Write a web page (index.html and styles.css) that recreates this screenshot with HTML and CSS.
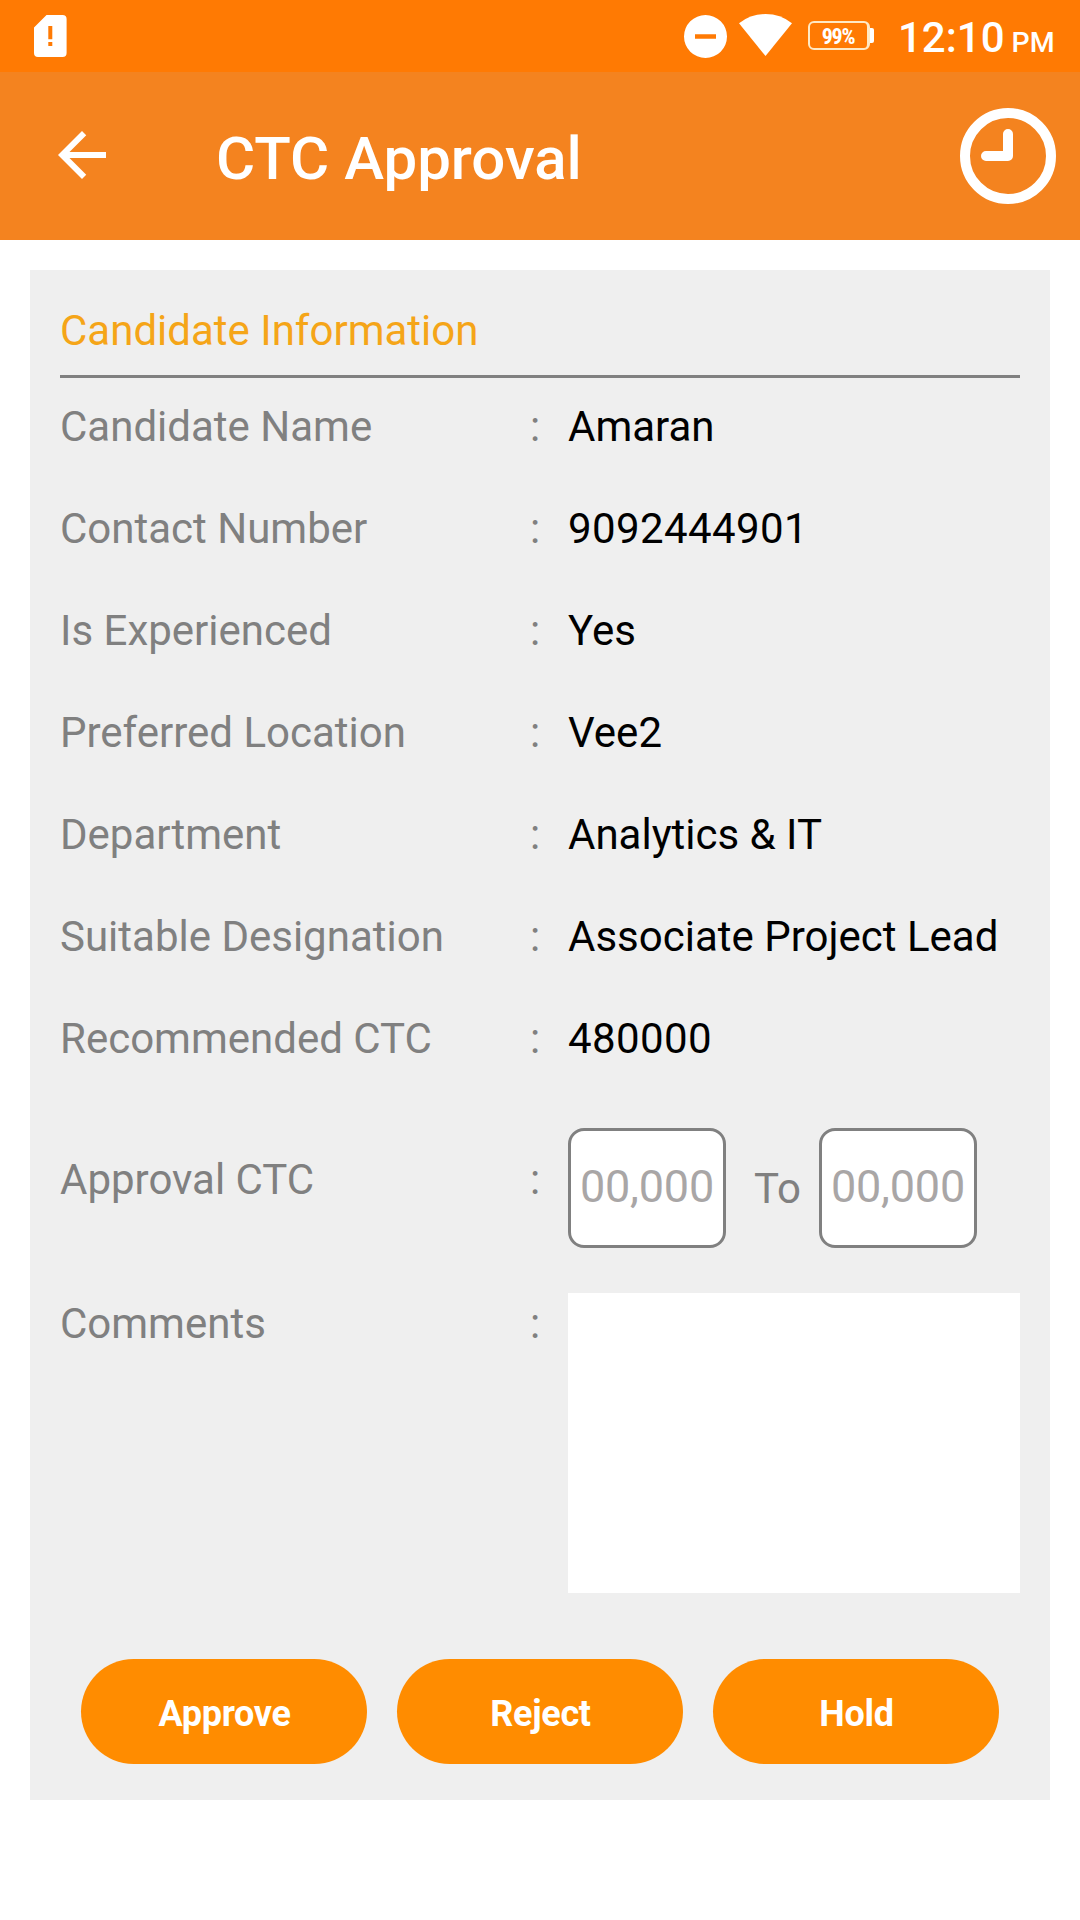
FILE: index.html
```html
<!DOCTYPE html>
<html lang="en">
<head>
<meta charset="utf-8">
<title>CTC Approval</title>
<link rel="stylesheet" href="styles.css">
</head>
<body>
<div class="status-bar">
  <svg class="sd-alert" viewBox="0 0 33 42"><path fill-rule="evenodd" d="M12.5 0H28.5Q32.6 0 32.6 4V38Q32.6 42 28.5 42H4Q0 42 0 38V12.500ZM14.300 11V24.300H18.300V11ZM14.300 27V31H18.300V27Z"/></svg>
  <div class="status-right">
    <svg class="dnd" viewBox="0 0 43 43"><path fill-rule="evenodd" d="M21.500 0a21.500 21.500 0 1 1 0 43a21.500 21.500 0 1 1 0-43ZM11 19.200V23.800H32V19.200Z"/></svg>
    <svg class="wifi" viewBox="0 0 53 42"><path d="M0 9.300Q11.500 0 26.500 0T53 9.300L26.500 42Z"/></svg>
    <div class="battery"><span class="battery-body">99%</span><span class="battery-tip"></span></div>
    <div class="clock">12:10<span class="meridiem">PM</span></div>
  </div>
</div>
<header class="app-bar">
  <svg class="back" viewBox="0 0 24 24"><path d="M20 11H7.830l5.590-5.590L12 4l-8 8 8 8 1.410-1.410L7.830 13H20v-2z"/></svg>
  <h1 class="app-title">CTC Approval</h1>
  <svg class="history" viewBox="0 0 96 96"><circle cx="48" cy="48" r="43"/><path d="M48 26V48H26"/></svg>
</header>
<main class="card">
  <h2 class="card-title">Candidate Information</h2>
  <div class="row"><span class="label">Candidate Name</span><span class="colon">:</span><span class="value">Amaran</span></div>
  <div class="row"><span class="label">Contact Number</span><span class="colon">:</span><span class="value number">9092444901</span></div>
  <div class="row"><span class="label">Is Experienced</span><span class="colon">:</span><span class="value">Yes</span></div>
  <div class="row"><span class="label">Preferred Location</span><span class="colon">:</span><span class="value">Vee2</span></div>
  <div class="row"><span class="label">Department</span><span class="colon">:</span><span class="value">Analytics &amp; IT</span></div>
  <div class="row"><span class="label">Suitable Designation</span><span class="colon">:</span><span class="value">Associate Project Lead</span></div>
  <div class="row"><span class="label">Recommended CTC</span><span class="colon">:</span><span class="value number">480000</span></div>
  <div class="row row-range">
    <span class="label">Approval CTC</span><span class="colon">:</span>
    <div class="range">
      <input class="amount" type="text" placeholder="00,000" aria-label="From">
      <span class="to">To</span>
      <input class="amount" type="text" placeholder="00,000" aria-label="To">
    </div>
  </div>
  <div class="row row-comments">
    <span class="label">Comments</span><span class="colon">:</span>
    <textarea class="comments" aria-label="Comments"></textarea>
  </div>
  <div class="actions">
    <button class="action">Approve</button>
    <button class="action">Reject</button>
    <button class="action">Hold</button>
  </div>
</main>
</body>
</html>
```
FILE: styles.css
```css
* { box-sizing: border-box; }
body {
  margin: 0;
  background: #fff;
  font-family: Roboto, sans-serif;
  font-size: 42px;
  color: #000;
}
svg { display: block; fill: #fff; }

.status-bar {
  display: flex;
  justify-content: space-between;
  height: 72px;
  padding: 0 24px 0 34px;
  background: #ff7a03;
  color: #fff;
}
.sd-alert { width: 33px; height: 42px; margin-top: 15px; }
.status-right { display: flex; }
.dnd { width: 43px; height: 43px; margin-top: 15px; }
.wifi { width: 53px; height: 42px; margin: 14px 16px 0 12px; }
.battery { display: flex; align-items: center; height: 29px; margin-top: 21px; }
.battery-body {
  width: 62px;
  height: 29px;
  padding-right: 1px;
  border: 2px solid #ffe9c4;
  border-right-width: 3px;
  border-radius: 6px;
  font: bold 22px/28px "Roboto Condensed", Roboto, sans-serif;
  letter-spacing: -1.3px;
  text-align: center;
}
.battery-tip { width: 4px; height: 15px; background: #fff; border-radius: 0 2px 2px 0; }
.clock {
  display: flex;
  align-items: baseline;
  width: 158px;
  margin-left: 24px;
  font-weight: 500;
  line-height: 75px;
  white-space: nowrap;
}
.meridiem { margin-left: 7px; font-size: 28.5px; }

.app-bar {
  display: flex;
  align-items: center;
  height: 168px;
  padding: 0 24px 0 46px;
  background: #f4831f;
  color: #fff;
}
.back { width: 72px; height: 72px; margin-top: -2px; }
.app-title {
  flex: 1;
  margin: 5px 0 0 98px;
  font-size: 60px;
  font-weight: 500;
  line-height: 70px;
}
.history { width: 96px; height: 96px; fill: none; stroke: #fff; stroke-width: 10; stroke-linecap: round; stroke-linejoin: round; }

.card {
  height: 1530px;
  margin: 30px;
  padding: 30px 30px 0;
  background: #efefef;
}
.card-title {
  height: 78px;
  margin: 0;
  border-bottom: 3px solid #808080;
  color: #f5a518;
  font-size: 42px;
  font-weight: 400;
  line-height: 61px;
}
.row {
  display: grid;
  grid-template-columns: 470px 38px 452px;
  height: 102px;
  padding-top: 24px;
  line-height: 50px;
  white-space: nowrap;
}
.label, .colon, .to { color: #808080; }
.number { letter-spacing: 0.4px; }
.row-range { height: 165px; padding-top: 36px; line-height: 103px; }
.range { display: flex; height: 120px; }
.amount {
  width: 158px;
  height: 120px;
  padding: 0 0 3px;
  border: 3px solid #808080;
  border-radius: 16px;
  background: #fff;
  font: 45px Roboto, sans-serif;
  letter-spacing: -0.2px;
  text-align: center;
}
.amount::placeholder { color: #a9a6a6; opacity: 1; }
.to { width: 93px; padding-left: 28px; line-height: 121px; }
.row-comments { height: 336px; padding-top: 36px; line-height: 61px; }
.comments {
  width: 452px;
  height: 300px;
  padding: 12px;
  border: 0;
  background: #fff;
  font: inherit;
  resize: none;
}
.actions { display: flex; gap: 30px; padding: 66px 21px 0; }
.action {
  width: 286px;
  height: 105px;
  padding: 4px 0 0 1px;
  border: 0;
  border-radius: 53px;
  background: #ff8c00;
  color: #fff;
  font: bold 36px Roboto, sans-serif;
  letter-spacing: -0.3px;
}
```
